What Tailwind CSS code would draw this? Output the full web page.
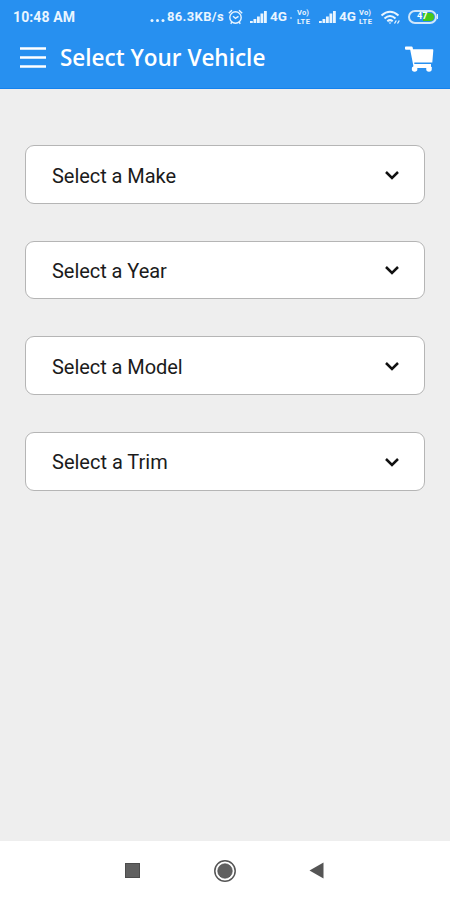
<!DOCTYPE html>
<html lang="en">
<head>
<meta charset="utf-8">
<title>Select Your Vehicle</title>
<script src="https://cdn.jsdelivr.net/npm/@tailwindcss/browser@4"></script>
</head>
<body class="h-[900px] w-[450px] overflow-hidden bg-[#eeeeee] font-['Roboto',sans-serif]">
<svg class="hidden">
  <symbol id="signal" viewBox="0 0 18 14"><g fill="currentColor"><rect x="0" y="11" width="2.8" height="2"/><rect x="3.5" y="9" width="2.8" height="4"/><rect x="7" y="6.5" width="2.8" height="6.5"/><rect x="10.5" y="3.5" width="2.8" height="9.5"/><rect x="14" y="1" width="2.8" height="12"/></g></symbol>
  <symbol id="chevron" viewBox="0 0 16 10"><path d="M2 2l6 6 6-6" fill="none" stroke="#111" stroke-width="2.5"/></symbol>
</svg>
<div class="flex h-full flex-col">
  <header class="h-[89px] border-b border-[#1482ee] bg-[#2790f0] text-white">
    <div class="flex h-[33px] items-center pl-[13px] text-[13px] leading-none text-[#e9f5ff]">
      <span class="w-[137px] whitespace-nowrap text-[14px] font-bold tracking-[0.1px]">10:48 AM</span>
      <svg class="mt-[8px] h-[3px] w-[17px]" viewBox="0 0 17 3" fill="currentColor"><circle cx="2" cy="1.5" r="1.5"/><circle cx="7.5" cy="1.5" r="1.5"/><circle cx="13" cy="1.5" r="1.5"/></svg>
      <span class="w-[61px] whitespace-nowrap font-bold tracking-[0.35px]">86.3KB/s</span>
      <svg class="h-[16px] w-[22px]" viewBox="0 0 22 16" fill="none" stroke="currentColor" stroke-width="1.4"><circle cx="7.5" cy="8.5" r="5.7"/><path d="M5 7.300l2.500 2 3-2M.8 4.300L4 1.200M14.200 4.300L11 1.200M4 13l-1.300 1.700M11 13l1.300 1.700"/></svg>
      <svg class="h-[14px] w-[18px]"><use href="#signal"/></svg>
      <span class="ml-[2px] w-[20px] text-[13.5px] font-bold">4G</span>
      <span class="mt-[3px] size-[2px] bg-white/40"></span>
      <span class="ml-[5px] flex w-[22px] flex-col text-[7.5px] font-bold leading-[9px]"><span class="tracking-[0.2px]">Vo)</span><span class="tracking-[0.4px]">LTE</span></span>
      <svg class="h-[14px] w-[18px]"><use href="#signal"/></svg>
      <span class="ml-[2px] w-[20px] text-[13.5px] font-bold">4G</span>
      <span class="flex w-[21px] flex-col text-[7.5px] font-bold leading-[9px]"><span class="tracking-[0.2px]">Vo)</span><span class="tracking-[0.4px]">LTE</span></span>
      <svg class="mt-px h-[15px] w-[28px]" viewBox="0 0 28 15" fill="none" stroke="currentColor" stroke-width="2"><path d="M1.500 5.500Q10 -2 18.500 5.500M4.500 8.500Q10 3.500 15.500 8.500M7.300 11.300Q10 9 12.700 11.300"/><path d="M8.500 12.400h3L10 14z" fill="currentColor" stroke="none"/><path d="M14.500 13.500l1.800-3M17.500 13.500l1.800-3" stroke-width="1.300"/></svg>
      <span class="flex h-[14px] w-[29px] rounded-full border-2 border-[#cfe6fb] p-px"><span class="flex w-[12px] items-center rounded-l-full"></span><span class="flex flex-1 items-center rounded-r-full bg-[#48c719]"><span class="-ml-[6px] text-[9px] font-bold leading-none text-white">47</span></span></span>
      <span class="h-[5px] w-px bg-[#dcefff]"></span>
    </div>
    <div class="flex h-[49px] items-center pl-[20px]">
      <svg class="h-[24px] w-[26px]" viewBox="0 0 26 24" fill="currentColor"><path d="M0 1.200h26v2.500H0zM0 10.200h26v2.500H0zM0 19.200h26v2.500H0z"/></svg>
      <h1 class="ml-[14px] w-[331px] whitespace-nowrap font-['Open_Sans',sans-serif] text-[22.5px] font-semibold leading-[30px]">Select Your Vehicle</h1>
      <svg class="mt-[3px] ml-[14px] h-[27px] w-[30px]" viewBox="0 0 30 27" fill="currentColor"><path d="M0 1.200Q0 .5.800.500H6.500Q7.500.500 7.700 1.500L8 3.300H27.500Q28.500 3.300 28.300 4.500L27.300 16.600H9.300V18H26V20.500L27 22H7L8.500 20.500 5.200 3.800H1Q0 3.800 0 2.800z"/><circle cx="9.600" cy="23" r="2.800"/><circle cx="24" cy="23" r="2.800"/></svg>
    </div>
  </header>
  <main class="flex flex-1 flex-col gap-[37px] px-[25px] pt-[56px] text-[20px] text-[#1b1b1b]">
    <button class="flex h-[59px] items-center justify-between rounded-[9px] border border-[#b5b5b5] bg-white pr-[24px] pl-[26px]"><span class="pt-[2px] tracking-[-0.05px]">Select a Make</span><svg class="h-[10px] w-[16px]"><use href="#chevron"/></svg></button>
    <button class="flex h-[58px] items-center justify-between rounded-[9px] border border-[#b5b5b5] bg-white pr-[24px] pl-[26px]"><span class="pt-[2px] tracking-[-0.05px]">Select a Year</span><svg class="h-[10px] w-[16px]"><use href="#chevron"/></svg></button>
    <button class="flex h-[59px] items-center justify-between rounded-[9px] border border-[#b5b5b5] bg-white pr-[24px] pl-[26px]"><span class="pt-[2px] tracking-[-0.05px]">Select a Model</span><svg class="h-[10px] w-[16px]"><use href="#chevron"/></svg></button>
    <button class="flex h-[59px] items-center justify-between rounded-[9px] border border-[#b5b5b5] bg-white pr-[24px] pl-[26px]"><span class="pt-px">Select a Trim</span><svg class="h-[10px] w-[16px]"><use href="#chevron"/></svg></button>
  </main>
  <nav class="flex h-[59px] items-center bg-white pl-[125px] text-[#606060]">
    <span class="size-[15px] border border-[#4c4c4c] bg-[#606060]"></span>
    <svg class="ml-[73px] size-[24px]" viewBox="0 0 24 24"><circle cx="12" cy="12" r="10.200" fill="none" stroke="#555" stroke-width="1.500"/><circle cx="12" cy="12" r="7.300" fill="#606060" stroke="#4c4c4c" stroke-width=".6"/></svg>
    <svg class="ml-[72px] h-[17px] w-[15px]" viewBox="0 0 15 17"><path d="M14.500 .5v16L.5 8.500z" fill="#555"/></svg>
  </nav>
</div>
</body>
</html>
